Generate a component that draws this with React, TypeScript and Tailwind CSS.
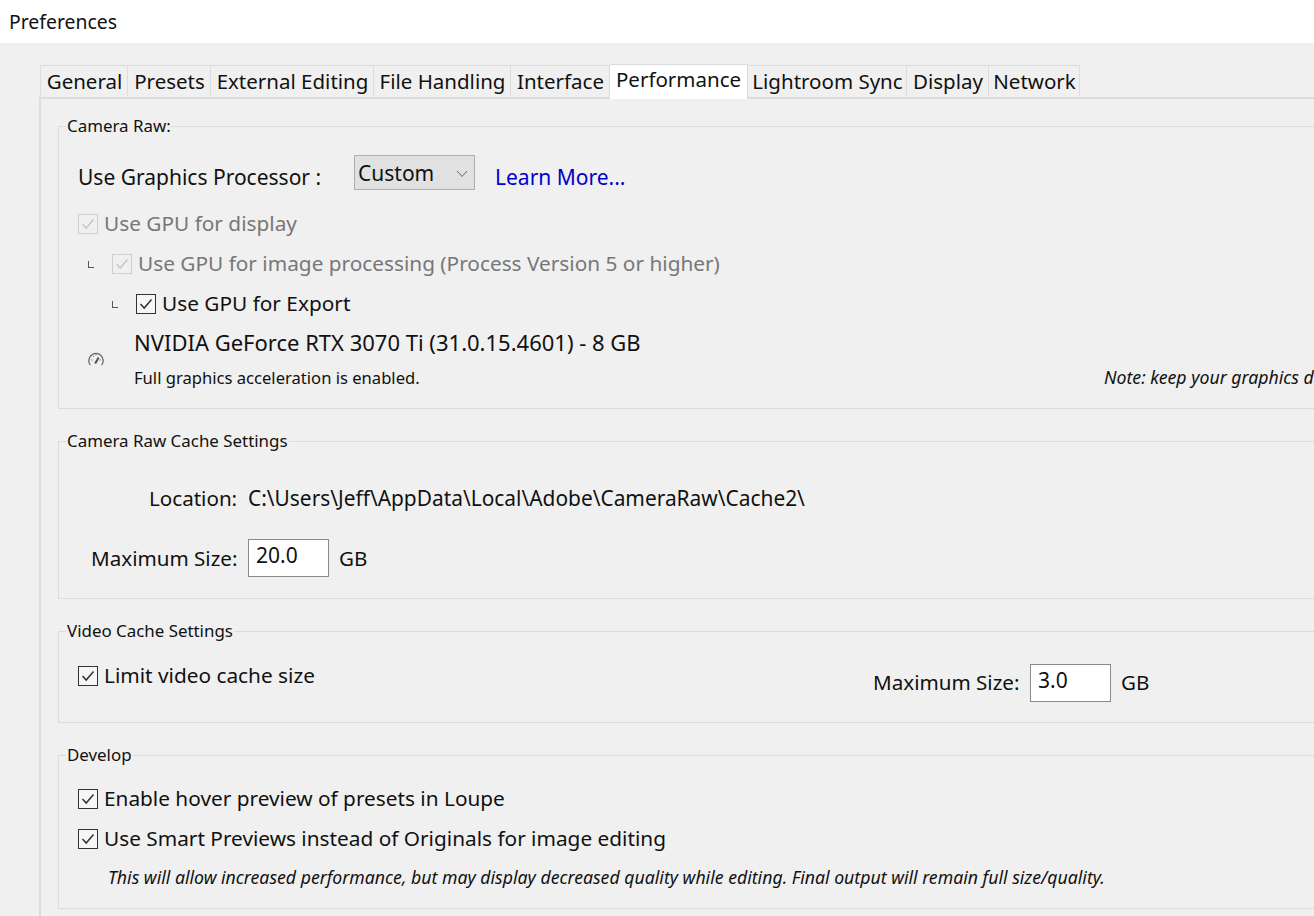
import type { ReactNode } from "react";

const tabs: [string, string][] = [
  ["General", "w-[88px]"],
  ["Presets", "w-[83px]"],
  ["External Editing", "w-[163px]"],
  ["File Handling", "w-[137px]"],
  ["Interface", "w-[99px]"],
  ["Performance", "w-[138px]"],
  ["Lightroom Sync", "w-[159px]"],
  ["Display", "w-[82px]"],
  ["Network", "w-[91px]"],
];

function Check({ disabled = false }: { disabled?: boolean }) {
  return (
    <span
      className={`flex h-[20px] w-[20px] shrink-0 items-center justify-center border ${
        disabled ? "border-[#cfcfcf] bg-[#f0f0f0]" : "border-[#333333] bg-[#f6f6f6]"
      }`}
    >
      <svg width="14" height="12" viewBox="0 0 14 12" fill="none">
        <path d="M1.5 6 L5.2 10 L12.5 1.5" stroke={disabled ? "#c8c8c8" : "#333333"} strokeWidth="1.5" />
      </svg>
    </span>
  );
}

function Elbow() {
  return <span className="block h-[7px] w-[6px] border-b border-l border-[#555555]" />;
}

function Gauge() {
  return (
    <svg width="16" height="14" viewBox="0 0 16 14" fill="none" stroke="#6a6a6a" strokeWidth="1.3">
      <path d="M2.4 13.2 A7.2 7.2 0 1 1 13.6 13.2" />
      <path d="M7.2 11.4 L10.6 5.6" stroke="#505050" strokeWidth="2" />
      <path d="M3.2 7.8 L4.4 8.2 M5 3.8 L5.7 4.8 M8 2 L8 3.4 M12.8 7.8 L11.6 8.2" strokeWidth="1" />
    </svg>
  );
}

function Group({
  title,
  legend = "",
  className,
  children,
}: {
  title: string;
  legend?: string;
  className: string;
  children: ReactNode;
}) {
  return (
    <section className={`relative w-[1300px] shrink-0 border border-[#dcdcdc] ${className}`}>
      <span className={`absolute left-[7px] top-[-15px] whitespace-nowrap bg-[#f0f0f0] px-[1px] text-[16.9px] leading-[28px] text-[#111111] ${legend}`}>
        {title}
      </span>
      {children}
    </section>
  );
}

function CheckRow({ label, disabled = false, className = "" }: { label: string; disabled?: boolean; className?: string }) {
  return (
    <div className={`flex h-[24px] items-center gap-[6px] whitespace-nowrap text-[20.8px] ${disabled ? "text-[#777777]" : ""} ${className}`}>
      <Check disabled={disabled} />
      {label}
    </div>
  );
}

function NumberBox({ value }: { value: string }) {
  return (
    <span className="flex h-[38px] w-[81px] shrink-0 items-center border border-[#8a8a8a] bg-white pb-[4px] pl-[7px] text-[21px]">
      {value}
    </span>
  );
}

export default function App() {
  return (
    <div className="h-[916px] w-[1314px] overflow-hidden bg-[#f0f0f0] font-['Noto_Sans','Open_Sans',sans-serif] text-[#111111]">
      <header className="flex h-[43px] items-center bg-white pl-[9px] text-[19.4px]">Preferences</header>

      <div className="ml-[40px] mt-[22px] flex h-[32px] items-end">
        {tabs.map(([t, w]) =>
          t === "Performance" ? (
            <div
              key={t}
              className={`${w} relative z-10 mb-[-2px] flex h-[35px] items-center justify-center border-r border-t border-[#dcdcdc] bg-white pb-[6px] text-[20.5px]`}
            >
              {t}
            </div>
          ) : (
            <div
              key={t}
              className={`${w} flex h-[32px] items-center justify-center border-r border-t border-[#dcdcdc] pb-[1px] pl-[1px] text-[20.5px] first:border-l`}
            >
              {t}
            </div>
          ),
        )}
      </div>

      <main className="ml-[39px] flex h-[900px] flex-col gap-[32px] border-l-2 border-t-2 border-[#dcdcdc] pl-[17px] pt-[27px]">
        <Group title="Camera Raw:" legend="w-[105px] overflow-hidden" className="h-[283px]">
          <div className="ml-[19px] mt-[33px] flex h-[36px] items-center whitespace-nowrap text-[21px]">
            <span className="w-[276px]">Use Graphics Processor :</span>
            <span className="mt-[-11px] flex h-[35px] w-[121px] items-center justify-between border border-[#adadad] bg-[#e1e1e1] pl-[3px] pr-[6px] pt-[3px]">
              Custom
              <svg width="12" height="8" viewBox="0 0 12 8" fill="none">
                <path d="M1 1 L6 6.5 L11 1" stroke="#666666" strokeWidth="1" />
              </svg>
            </span>
            <span className="ml-[20px] text-[#0000cc]">Learn More...</span>
          </div>
          <CheckRow disabled label="Use GPU for display" className="ml-[19px] mt-[16px]" />
          <div className="ml-[29px] mt-[16px] flex items-center">
            <span className="w-[24px]"><Elbow /></span>
            <CheckRow disabled label="Use GPU for image processing (Process Version 5 or higher)" />
          </div>
          <div className="ml-[53px] mt-[16px] flex items-center">
            <span className="w-[24px]"><Elbow /></span>
            <CheckRow label="Use GPU for Export" />
          </div>
          <div className="mt-[14px] flex">
            <div className="ml-[29px] flex w-[46px] shrink-0 items-center pb-[2px]">
              <Gauge />
            </div>
            <div className="w-[1220px] whitespace-nowrap">
              <div className="flex h-[24px] items-center text-[22px]">NVIDIA GeForce RTX 3070 Ti (31.0.15.4601) - 8 GB</div>
              <div className="mt-[12px] flex h-[24px] items-center justify-between text-[16.6px]">
                <span>Full graphics acceleration is enabled.</span>
                <span className="mb-[2px] w-[250px] text-[17.7px] italic">Note: keep your graphics drivers up to date.</span>
              </div>
            </div>
          </div>
        </Group>

        <Group title="Camera Raw Cache Settings" className="h-[158px]">
          <div className="ml-[90px] mt-[44px] flex h-[24px] items-center whitespace-nowrap text-[20.6px]">
            <span className="w-[99px]">Location:</span>
            <span className="pt-[2px] text-[20.9px]">C:\Users\Jeff\AppData\Local\Adobe\CameraRaw\Cache2\</span>
          </div>
          <div className="ml-[32px] mt-[29px] flex h-[38px] items-center whitespace-nowrap text-[20.6px]">
            <span className="w-[157px]">Maximum Size:</span>
            <NumberBox value="20.0" />
            <span className="ml-[10px]">GB</span>
          </div>
        </Group>

        <Group title="Video Cache Settings" className="h-[92px]">
          <div className="mt-[32px] flex h-[38px] whitespace-nowrap text-[20.6px]">
            <CheckRow label="Limit video cache size" className="ml-[19px] w-[795px]" />
            <div className="flex h-[38px] items-center">
              <span className="w-[157px] pb-[2px]">Maximum Size:</span>
              <NumberBox value="3.0" />
              <span className="ml-[10px] pb-[2px]">GB</span>
            </div>
          </div>
        </Group>

        <Group title="Develop" className="h-[154px]">
          <CheckRow label="Enable hover preview of presets in Loupe" className="ml-[19px] mt-[31px]" />
          <CheckRow label="Use Smart Previews instead of Originals for image editing" className="ml-[19px] mt-[16px]" />
          <div className="ml-[49px] mt-[14px] flex h-[24px] items-center whitespace-nowrap text-[17.68px] italic">
            This will allow increased performance, but may display decreased quality while editing. Final output will remain full size/quality.
          </div>
        </Group>
      </main>
    </div>
  );
}
